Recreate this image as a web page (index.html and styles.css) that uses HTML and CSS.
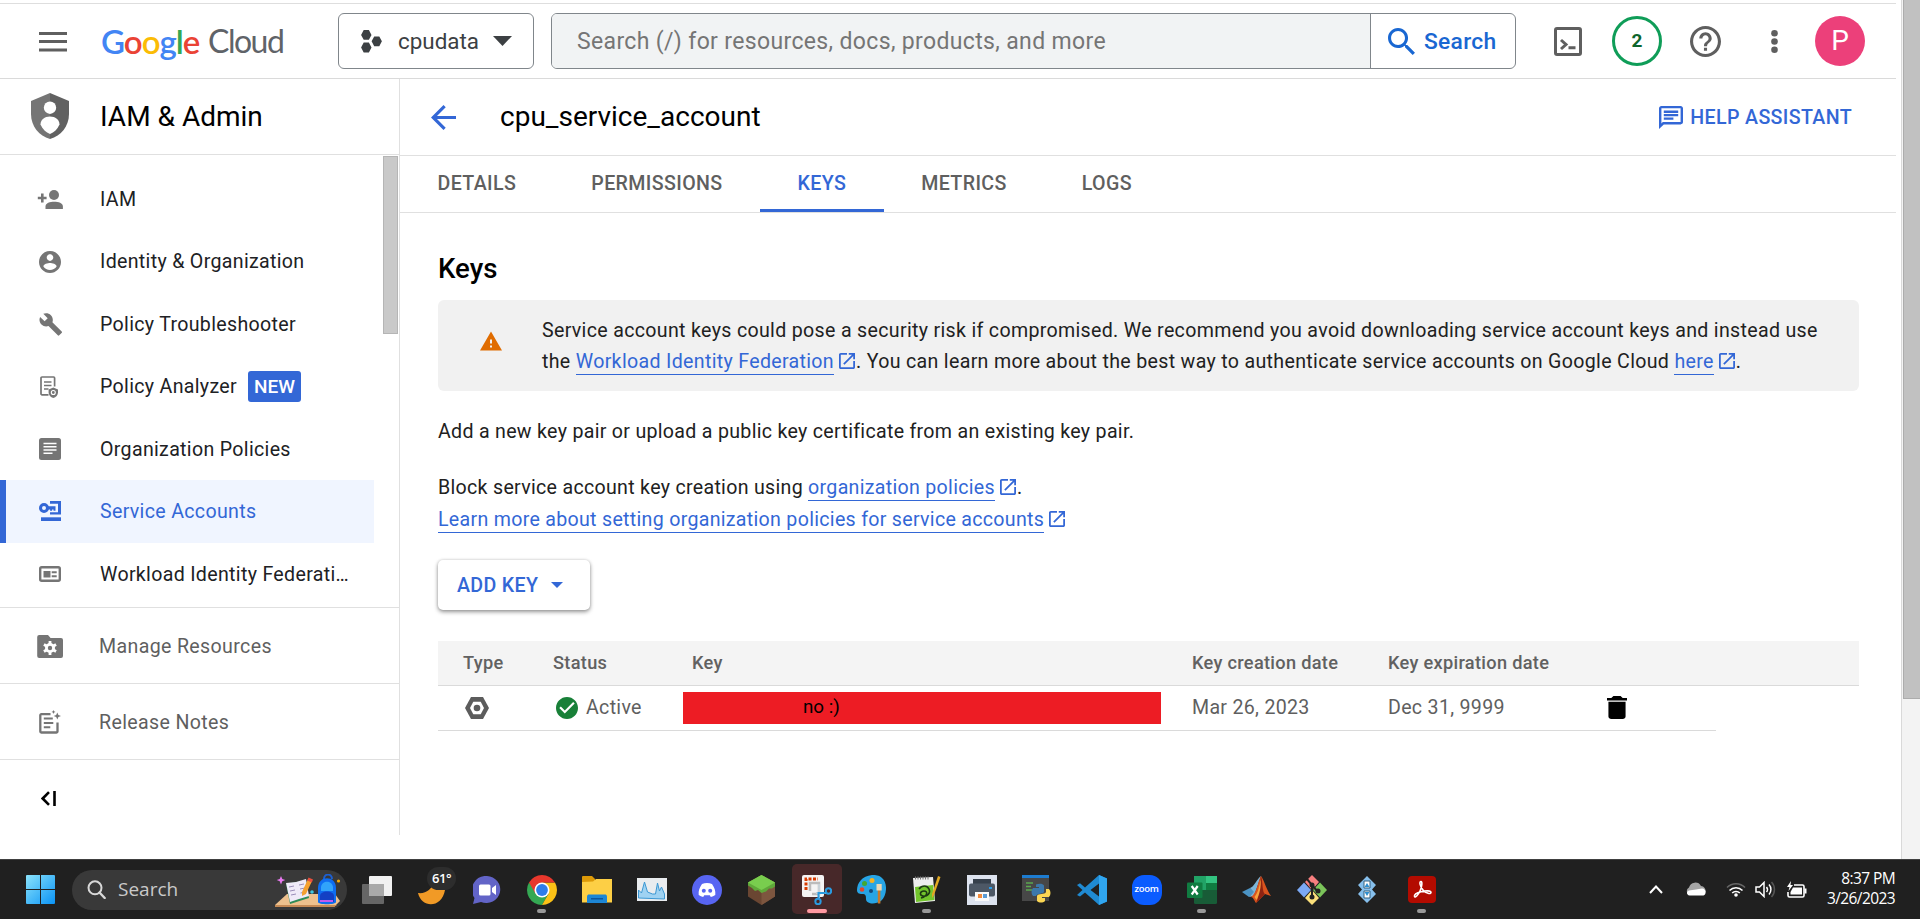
FILE: index.html
```html
<!DOCTYPE html>
<html lang="en">
<head>
<meta charset="utf-8">
<title>cpu_service_account – IAM &amp; Admin – cpudata – Google Cloud console</title>
<link rel="stylesheet" href="styles.css">
</head>
<body>
<svg class="defs" width="0" height="0" aria-hidden="true">
  <symbol id="ext" viewBox="3 3 18 18"><path d="M19 19H5V5h7V3H5c-1.11 0-2 .9-2 2v14c0 1.1.89 2 2 2h14c1.1 0 2-.9 2-2v-7h-2v7zM14 3v2h3.59l-9.83 9.83 1.41 1.41L19 6.41V10h2V3h-7z"/></symbol>
</svg>
<div class="screen">
 <div class="browser">
  <div class="page">
   <header class="topbar">
    <svg class="menu" width="28" height="20" viewBox="0 0 28 20"><path d="M0 0h28v3H0zM0 8h28v3H0zM0 16.5h28v3H0z" fill="#5f5f5f"/></svg>
    <div class="logo"><span class="google"><b class="b">G</b><b class="r">o</b><b class="y">o</b><b class="b">g</b><b class="g">l</b><b class="r">e</b></span><span class="cloud">Cloud</span></div>
    <div class="project">
     <svg width="21" height="23" viewBox="0 0 21 23" fill="#3c4043"><path d="M2.7 0h5.2l2.6 4.9-2.6 4.9H2.7L.1 4.9zM2.7 12.6h5.2l2.6 4.9-2.6 4.9H2.7L.1 17.5zM13.2 6.4h5.1l2.6 4.9-2.6 4.9h-5.1l-2.6-4.9z"/></svg>
     <span class="project-name">cpudata</span>
     <svg width="19" height="10" viewBox="0 0 19 10"><path d="M0 0h19l-9.500 10z" fill="#3c4043"/></svg>
    </div>
    <div class="search">
     <div class="search-field">Search (/) for resources, docs, products, and more</div>
     <div class="search-btn"><svg width="27" height="27" viewBox="3 3 17.500 17.500" fill="#1967d2"><path d="M15.500 14h-.79l-.28-.27C15.410 12.590 16 11.110 16 9.500 16 5.910 13.090 3 9.500 3S3 5.910 3 9.500 5.910 16 9.500 16c1.610 0 3.090-.59 4.230-1.570l.27.28v.79l5 4.990L20.490 19l-4.990-5zm-6 0C7.010 14 5 11.990 5 9.500S7.010 5 9.500 5 14 7.010 14 9.500 11.990 14 9.500 14z"/></svg><span>Search</span></div>
    </div>
    <svg class="shell" width="28" height="29" viewBox="0 0 28 29"><rect x="1.500" y="1.500" width="25" height="26" rx="1.500" fill="none" stroke="#5f5f5f" stroke-width="3"/><path d="M7 13l5 4.500L7 22M14.500 20.700h7" fill="none" stroke="#5f5f5f" stroke-width="3"/></svg>
    <div class="notif">2</div>
    <svg class="help" width="31" height="31" viewBox="2 2 20 20" fill="#5f5f5f"><path d="M11 18h2v-2h-2v2zm1-16C6.480 2 2 6.480 2 12s4.480 10 10 10 10-4.480 10-10S17.520 2 12 2zm0 18c-4.410 0-8-3.590-8-8s3.590-8 8-8 8 3.590 8 8-3.590 8-8 8zm0-14c-2.210 0-4 1.790-4 4h2c0-1.100.9-2 2-2s2 .9 2 2c0 2-3 1.750-3 5h2c0-2.250 3-2.500 3-5 0-2.210-1.790-4-4-4z"/></svg>
    <svg class="dots" width="7" height="23" viewBox="0 0 7 23" fill="#5f5f5f"><circle cx="3.500" cy="3.300" r="3.300"/><circle cx="3.500" cy="11.500" r="3.300"/><circle cx="3.500" cy="19.700" r="3.300"/></svg>
    <div class="avatar">P</div>
   </header>
   <div class="body">
    <nav class="side">
     <div class="product">
      <svg width="38" height="46" viewBox="0 0 38 46"><path d="M19 0L0 8v13c0 12 8 22 19 25z" fill="#757575"/><path d="M19 0l19 8v13c0 12-8 22-19 25z" fill="#616161"/><circle cx="19" cy="14.700" r="6.200" fill="#fff"/><path d="M9.500 31.500c0-5 4.200-8 9.500-8s9.500 3 9.500 8c-2 4.500-5.500 8-9.500 9.500-4-1.500-7.500-5-9.500-9.500z" fill="#fff"/></svg>
      <span class="product-name">IAM &amp; Admin</span>
     </div>
     <div class="nav-list">
      <div class="thumb"></div>
      <div class="item"><i><svg width="26" height="19" viewBox="0 0 26 19"><path d="M4 3.500h2.600v3.200h3V9.300h-3v3.200H4V9.300H.8V6.700H4z"/><circle cx="17" cy="5" r="5"/><path d="M8.500 19v-2.500c0-3.500 4.500-4.800 8.700-4.800s8.700 1.300 8.700 4.800V19z"/></svg></i><span>IAM</span></div>
      <div class="item"><i><svg width="22" height="22" viewBox="2 2 20 20"><path d="M12 2C6.480 2 2 6.480 2 12s4.480 10 10 10 10-4.480 10-10S17.520 2 12 2zm0 3c1.660 0 3 1.340 3 3s-1.340 3-3 3-3-1.340-3-3 1.340-3 3-3zm0 14.200c-2.500 0-4.710-1.280-6-3.220.03-1.990 4-3.080 6-3.080 1.990 0 5.970 1.090 6 3.080-1.290 1.940-3.500 3.220-6 3.220z"/></svg></i><span>Identity &amp; Organization</span></div>
      <div class="item"><i><svg width="23" height="23" viewBox="0.500 1 22.500 22.200"><path d="M22.700 19l-9.100-9.100c.9-2.300.4-5-1.500-6.900-2-2-5-2.400-7.400-1.300L9 6 6 9 1.600 4.700C.4 7.100.9 10.100 2.900 12.100c1.900 1.900 4.600 2.400 6.900 1.500l9.100 9.100c.4.4 1 .4 1.400 0l2.300-2.300c.5-.4.5-1.100.1-1.400z"/></svg></i><span>Policy Troubleshooter</span></div>
      <div class="item"><i class="l"><svg width="18" height="22" viewBox="0 0 18 22"><path d="M8.500 18.800H2A1 1 0 0 1 1 17.800V2A1 1 0 0 1 2 1H13.600A1 1 0 0 1 14.600 2V10.500M4 6h7.500M4 9.500h7.500M4 13h4.500" fill="none" stroke="#757575" stroke-width="1.700"/><path d="M13.300 11.500l4.700 2v3c0 2.600-2 4.900-4.700 5.500-2.700-.6-4.700-2.900-4.700-5.500v-3z"/><circle cx="13.300" cy="16.500" r="2" fill="none" stroke="#fff" stroke-width="1.100"/></svg></i><span class="up">Policy Analyzer</span><em>NEW</em></div>
      <div class="item"><i><svg width="22" height="22" viewBox="0 0 22 22"><rect width="22" height="22" rx="2.500"/><path d="M4.500 5.500h13M4.500 8.800h13M4.500 12h13M4.500 15.300h9" stroke="#fff" stroke-width="1.500"/></svg></i><span>Organization Policies</span></div>
      <div class="item active"><i><svg width="22" height="20" viewBox="0 0 22 20"><path d="M2 16.300h20V20H2z"/><circle cx="5" cy="7" r="3.500" fill="none" stroke="#3367d6" stroke-width="3"/><path d="M8 5.300h8.500v4.500h-2V8.500h-1.400v1.300h-2V8.500H8zM11 0h11v13.500H11v-2.200h8V2.700h-8z"/></svg></i><span>Service Accounts</span></div>
      <div class="item"><i><svg width="22" height="16" viewBox="0 0 22 16"><rect x="1.200" y="1.200" width="19.600" height="13.600" rx="1.500" fill="none" stroke="#757575" stroke-width="2.400"/><path d="M4.500 5h7v6.500h-7z"/><path d="M12.700 6.200h5M12.700 10.200h5" stroke="#757575" stroke-width="2"/></svg></i><span>Workload Identity Federati…</span></div>
     </div>
     <div class="foot-item"><i><svg width="26" height="23" viewBox="0 0 26 23"><path d="M2.200 0H11l2.600 3H24a2 2 0 0 1 2 2v16a2 2 0 0 1-2 2H2.200A2 2 0 0 1 .2 21V2A2 2 0 0 1 2.200 0z"/><g fill="#fff"><circle cx="13" cy="13" r="5"/><path d="M11.600 6h2.800v14h-2.800z"/><path d="M11.600 6h2.800v14h-2.800z" transform="rotate(60 13 13)"/><path d="M11.600 6h2.800v14h-2.800z" transform="rotate(120 13 13)"/></g><circle cx="13" cy="13" r="2.200"/></svg></i><span>Manage Resources</span></div>
     <div class="foot-item"><i><svg width="22" height="24" viewBox="0 0 22 24"><path d="M11.500 4.200H2.300a1 1 0 0 0-1 1V21.500a1 1 0 0 0 1 1H17.500a1 1 0 0 0 1-1V12.500" fill="none" stroke="#757575" stroke-width="2.300"/><path d="M4.800 8.500h9M4.800 13h9.500M4.800 17.300h6.500" fill="none" stroke="#757575" stroke-width="2"/><path d="M18.300 2.500l1.100 2.400 2.600 1-2.600 1-1.100 2.600-1.100-2.600-2.500-1 2.500-1zM14.500 0l.6 1.300 1.400.6-1.400.6-.6 1.400-.6-1.400-1.400-.6 1.400-.6z"/></svg></i><span>Release Notes</span></div>
     <div class="foot-item"><i><svg class="collapse" width="15" height="15" viewBox="0 0 15 15"><path d="M8 1.200L1.700 7.500 8 13.800M13.500 0V15" fill="none" stroke="#000" stroke-width="2.600"/></svg></i></div>
    </nav>
    <main class="main">
     <div class="titlebar">
      <svg width="25" height="25" viewBox="4 4 16 16" fill="#3367d6"><path d="M20 11H7.830l5.590-5.590L12 4l-8 8 8 8 1.410-1.410L7.830 13H20v-2z"/></svg>
      <h1>cpu_service_account</h1>
      <div class="assist"><svg width="24" height="23" viewBox="2 2 20 20" preserveAspectRatio="none" fill="#3367d6"><path d="M4 4h16v12H5.170L4 17.170V4m0-2c-1.100 0-1.990.9-1.990 2L2 22l4-4h14c1.100 0 2-.9 2-2V4c0-1.100-.9-2-2-2H4zm2 10h8v2H6v-2zm0-3h12v2H6V9zm0-3h12v2H6V6z"/></svg><span>HELP ASSISTANT</span></div>
     </div>
     <div class="tabs"><span>DETAILS</span><span>PERMISSIONS</span><span class="on">KEYS</span><span>METRICS</span><span>LOGS</span></div>
     <div class="content">
      <h2>Keys</h2>
      <div class="alert">
       <svg width="22" height="20" viewBox="1 2 22 19"><path fill="#e06c00" d="M1 21h22L12 2 1 21zm12-3h-2v-2h2v2zm0-4h-2v-4h2v4z"/></svg>
       <p>Service account keys could pose a security risk if compromised. We recommend you avoid downloading service account keys and instead use<br>the <a>Workload Identity Federation</a><svg class="ext"><use href="#ext"/></svg>. You can learn more about the best way to authenticate service accounts on Google Cloud <a>here</a><svg class="ext"><use href="#ext"/></svg>.</p>
      </div>
      <p class="para">Add a new key pair or upload a public key certificate from an existing key pair.</p>
      <p class="para links">Block service account key creation using <a>organization policies</a><svg class="ext"><use href="#ext"/></svg>.<br><a>Learn more about setting organization policies for service accounts</a><svg class="ext"><use href="#ext"/></svg></p>
      <div class="addkey"><span>ADD KEY</span><svg width="12" height="6" viewBox="0 0 12 6"><path d="M0 0h12L6 6z" fill="#3367d6"/></svg></div>
      <div class="thead row"><span>Type</span><span>Status</span><span>Key</span><span>Key creation date</span><span>Key expiration date</span></div>
      <div class="tbody row">
       <span><svg class="hex" width="24" height="22" viewBox="0 0 24 22"><path d="M6 0h12l6 11-6 11H6L0 11z" fill="#5c5c5c"/><path d="M8.300 4.800h7.400L19 11l-3.300 6.200H8.300L5 11z" fill="#fff"/><circle cx="12" cy="11" r="3.300" fill="#5c5c5c"/></svg></span>
       <span class="status"><svg width="22" height="22" viewBox="2 2 20 20"><path fill="#188038" d="M12 2C6.480 2 2 6.480 2 12s4.480 10 10 10 10-4.480 10-10S17.520 2 12 2zm-2 15l-5-5 1.410-1.410L10 14.170l7.590-7.590L19 8l-9 9z"/></svg>Active</span>
       <span class="redact">no :)</span>
       <span>Mar 26, 2023</span>
       <span>Dec 31, 9999</span>
       <span><svg class="trash" width="20" height="23" viewBox="5 3 14 18" preserveAspectRatio="none"><path d="M6 19c0 1.100.9 2 2 2h8c1.100 0 2-.9 2-2V7.500H6v11.500zM19 4.500h-3l-1.500-1.500h-5L8 4.500H5v2h14v-2z"/></svg></span>
      </div>
     </div>
    </main>
   </div>
  </div>
  <div class="vscroll"><div class="vthumb"></div></div>
 </div>
 <footer class="taskbar">
  <svg class="win" width="29" height="29" viewBox="0 0 29 29"><defs><linearGradient id="w" x1="0" y1="0" x2="1" y2="1"><stop offset="0" stop-color="#8be3fb"/><stop offset="1" stop-color="#0a93f5"/></linearGradient></defs><path fill="url(#w)" d="M1 0h13v14H0V1a1 1 0 0 1 1-1zM15 0h13a1 1 0 0 1 1 1v13H15zM0 15h14v14H1a1 1 0 0 1-1-1zM15 15h14v13a1 1 0 0 1-1 1H15z"/></svg>
  <div class="tsearch">
   <svg width="19" height="19" viewBox="0 0 19 19"><circle cx="8" cy="7.800" r="6.500" fill="none" stroke="#d8d8d8" stroke-width="2"/><path d="M12.500 12.500l5.200 5.500" stroke="#d8d8d8" stroke-width="2.400" stroke-linecap="round"/></svg>
   <span>Search</span>
   <svg class="art" width="68" height="34" viewBox="0 0 68 34"><path d="M12 20h48l5 7-6 6H0v-2z" fill="#eec18e"/><path d="M0 31h62l-3 2H0z" fill="#c58a55"/><path d="M6 2l1.300 3 3 1-3 1.300L6 10.500 4.700 7.300l-3-1.300 3-1z" fill="#e879f0"/><path d="M11 10l10-2 10-1 3 17-19 6z" fill="#2f8b57"/><path d="M11 9l10-1 3 17-9 3zM21 8l10-3 3 17-10 3z" fill="#efeaf8"/><path d="M14 13l5-1M15 17l5-1M16 21l5-1M24 11l5-1M25 15l5-1M25.500 19l5-1" stroke="#9a8db8" stroke-width="1"/><path d="M33 5l4 2-6 13-4 2 0-4z" fill="#f5a030"/><path d="M33.500 3.500l4.500 2-1.200 3-4.400-2z" fill="#ea4f3c"/><path d="M49 5c0-6 8-6 8 0" fill="none" stroke="#1d5fd0" stroke-width="2"/><path d="M43 14c0-13 18-13 18 0v14c0 3-18 3-18 0z" fill="#0f6df0"/><path d="M46 13c1-7 11-7 12 0v4H46z" fill="#31a4fa"/><path d="M45 22c0-6 14-6 14 0v6H45z" fill="#1340c4"/><path d="M45 26h13v2H45z" fill="#c05bf0"/><circle cx="37" cy="18" r="1.800" fill="#3ec7e0"/><circle cx="63.500" cy="7" r="1.600" fill="#f9ab00"/></svg>
  </div>
  <div class="apps">
   <div><svg width="30" height="28" viewBox="0 0 30 28"><rect x="7" width="23" height="20" rx="1" fill="#f1f1f1"/><rect y="8" width="22" height="20" rx="1" fill="#666"/><path d="M7 8h15v12H7z" fill="#a9a9a9"/></svg></div>
   <div class="weather"><svg width="28" height="28" viewBox="0 0 28 28"><path d="M0 16c8 1 14-4 16-11 9-2 12 2 11 8C24 31 4 32 0 16z" fill="#f19a26"/></svg><b>61°</b></div>
   <div><svg width="28" height="28" viewBox="0 0 28 28"><path d="M14 0a14 13.500 0 1 1-6 26L0 28l1.500-6A14 14 0 0 1 14 0z" fill="#6264c7"/><rect x="6" y="8.500" width="11.500" height="11" rx="1.500" fill="#fff"/><path d="M19 12l4-3v10l-4-3z" fill="#fff"/></svg></div>
   <div><svg width="30" height="30" viewBox="0 0 30 30"><path d="M15 15L2.010 7.500A15 15 0 0 0 15 30l6.500-11.250z" fill="#34a853"/><path d="M15 15l6.500 3.750L15 30A15 15 0 0 0 27.990 7.500H15z" fill="#fbc116"/><path d="M2.010 7.500A15 15 0 0 1 27.990 7.500H15L8.500 18.750z" fill="#e8372c"/><circle cx="15" cy="15" r="7.500" fill="#fff"/><circle cx="15" cy="15" r="5.900" fill="#2f7de9"/></svg><u></u></div>
   <div><svg width="30" height="27" viewBox="0 0 30 27"><path d="M0 1a1 1 0 0 1 1-1h9l3 3v4H0z" fill="#dd9a08"/><path d="M0 6l11-.5L14 3h16v23.500H0z" fill="#fdcf45"/><path d="M5 27v-6c0-2 1-2.500 2-2.500h16c1 0 2 .5 2 2.500v6z" fill="#1d86d5"/><path d="M9 22h12v1.500H9z" fill="#0d559d"/></svg></div>
   <div><svg width="30" height="23" viewBox="0 0 30 23"><path d="M0 0h30v23H0z" fill="#e9ecef"/><path d="M1.500 20V12l3 3 3-11 3 10 5 2 3 0 2-11 2 8 2-4 3 7v5z" fill="#9fd2f2" stroke="#3b97d3"/></svg></div>
   <div><svg width="30" height="30" viewBox="0 0 30 30"><circle cx="15" cy="15" r="15" fill="#5865f2"/><path d="M10 9c3-1.200 7-1.200 10 0 2.500 3.500 3.700 7 3.300 11-1.500 1-3 1.700-4.500 2l-1-1.700h-5.600L11.200 22c-1.500-.3-3-1-4.500-2C6.300 16 7.500 12.500 10 9z" fill="#fff"/><circle cx="11.800" cy="15.700" r="2" fill="#5865f2"/><circle cx="18.200" cy="15.700" r="2" fill="#5865f2"/></svg></div>
   <div><svg width="27" height="30" viewBox="0 0 27 30"><path d="M13.500 0L27 7.500v14L13.500 30 0 21.500v-14z" fill="#6a4632"/><path d="M13.500 15L27 7.500v14L13.500 30z" fill="#7d563f"/><path d="M13.500 0L27 7.500v4l-3 2-3 0-3 3-4.500 1.500-3.500-3-3 1-3-3L0 10.500v-3z" fill="#5fa83a"/><path d="M13.500 0L27 7.500 13.500 15 0 7.500z" fill="#79cd4e"/></svg></div>
   <div class="sel"><svg width="30" height="30" viewBox="0 0 30 30"><rect width="22" height="22" rx="2" fill="#f4f4f4"/><path d="M4 15V4h12" fill="none" stroke="#d83b01" stroke-width="3" stroke-dasharray="3 1.500"/><path d="M8 16V8h9v11h-7" fill="none" stroke="#bcbcbc" stroke-width="2.500"/><path d="M17 9v14M14 18h11" stroke="#c9d2d8" stroke-width="2"/><circle cx="16" cy="26.500" r="2.700" fill="none" stroke="#2a9be0" stroke-width="2"/><circle cx="26.500" cy="16" r="2.700" fill="none" stroke="#2a9be0" stroke-width="2"/><path d="M16.500 24v-6h7" fill="none" stroke="#2a9be0" stroke-width="2"/></svg><u></u></div>
   <div><svg width="29" height="29" viewBox="0 0 29 29"><path d="M15 0C5 1 0 8 0 15c0 3 2 4 5 4 4 0 4 2 4 5 0 5 9 6 15 2 6-5 7-18 1-23-3-3-6-3-10-3z" fill="#27a5e5"/><circle cx="5" cy="14.500" r="2.300" fill="#e2452f"/><circle cx="7.500" cy="8.500" r="2.500" fill="#43a832"/><circle cx="15" cy="5.500" r="2.500" fill="#f4b223"/><circle cx="14" cy="16" r="2" fill="#134a7c"/><path d="M20.800 15h2.600v13.500h-2.600z" fill="#c87a2b"/><path d="M19.500 9h5.200v6.500h-5.200z" fill="#ead7b5"/></svg></div>
   <div><svg width="28" height="29" viewBox="0 0 28 29"><path d="M0 3l20-1 2 24-20 2z" fill="#eee"/><path d="M2 12l18-2 1.500 15L3 27z" fill="#72c52c"/><path d="M6 14c3-4 8-4 10 0s-2 8-6 7-3-5 1-5 4 5-3 7" fill="none" stroke="#1d3a12" stroke-width="1.600"/><path d="M25 1l2.500 1L21 20l-2 3 0-4z" fill="#e2a922"/><path d="M2 3h14" stroke="#777" stroke-width="3" stroke-dasharray="1 1.500"/></svg><u></u></div>
   <div><svg width="30" height="30" viewBox="0 0 30 30"><path d="M0 0h30v30H0z" fill="#dde3ef"/><path d="M6 4h18v6H6z" fill="#36404c"/><rect x="2" y="8.500" width="26" height="13" rx="2" fill="#4d5866"/><path d="M8 17h14v9H8z" fill="#fafafa"/><path d="M11 19h4v4h-4z" fill="#f28b3c"/><path d="M16 19h4v4h-4z" fill="#5b9bd5"/><path d="M22 12h3v2h-3z" fill="#2c9ce8"/></svg></div>
   <div><svg width="29" height="29" viewBox="0 0 29 29"><path d="M0 2h27v24H0z" fill="#474747"/><path d="M0 0h27v3H0z" fill="#1d7cd0"/><path d="M4 8h7M4 11.500h5M4 15h6" stroke="#5ba84f" stroke-width="1.500"/><path d="M14 9.500c3-1 7-1 8 1V17c0 2-7 1-8 4h-3c-2-2-2-6 0-8h6v-1h-3z" fill="#3c78ab"/><path d="M24 14h3c2 2 2 6 0 8h-7v1h3v3c-2 2-6 2-8 0v-5c1-3 8-1 9-4z" fill="#fbd653"/></svg></div>
   <div><svg width="30" height="30" viewBox="0 0 30 30"><path d="M22 0l8 3.500v23L22 30 8 17.500l-5 4L0 20l5.500-5L0 10l3-1.700 5 4.200zM22 8.500L13.500 15l8.500 6.500z" fill="#1f8ad2" fill-rule="evenodd"/><path d="M22 0l8 3.500v23L22 30z" fill="#30a6f0"/></svg></div>
   <div><div class="zoom">zoom</div></div>
   <div><svg width="30" height="28" viewBox="0 0 30 28"><rect x="7" width="23" height="28" rx="1.500" fill="#185c37"/><path d="M7 0h12v14H7z" fill="#21a366"/><path d="M19 0h11v7H19z" fill="#33c481"/><path d="M19 7h11v7H19z" fill="#107c41"/><rect y="6.500" width="15.500" height="15.500" rx="1" fill="#107c41"/><path d="M4.700 10l6 8.500M10.700 10l-6 8.500" stroke="#fff" stroke-width="2.200"/></svg><u></u></div>
   <div><svg width="29" height="27" viewBox="0 0 29 27"><path d="M0 16l8-4 5 4-6 5z" fill="#4b93c4"/><path d="M8 12c4-1 7-9 11-12l-7 20-5 1 5-5z" fill="#7cb5d8"/><path d="M19 0c3 4 6 15 10 20l-6-2-9 9c-2-3-3-6-5-6 6-4 7-16 10-21z" fill="#d9541e"/><path d="M19 0c2 6 1 16 4 18l-9 9c4-8 3-19 5-27z" fill="#8e2312"/><path d="M18.500 3c1 7-1 16-4 21l-2-3c4-5 5-12 6-18z" fill="#f6a23c"/></svg></div>
   <div><svg width="30" height="30" viewBox="0 0 30 30"><path d="M15 0l7 7-7 8-7-8z" fill="#f77f7f"/><path d="M23 7.500l7 7.500-7 7.500-7-7.500z" fill="#7bc45a"/><path d="M7 7.500l7 7.500-7 7.500L0 15z" fill="#7ba9f5"/><path d="M15 15l7 8-7 7-7-7z" fill="#fbe07a"/><path d="M10 4l5 6v13M15 10l6 7" fill="none" stroke="#222" stroke-width="2"/><circle cx="15" cy="10" r="2.500" fill="#222"/><circle cx="15" cy="22" r="2.500" fill="#222"/><circle cx="21" cy="16" r="2.500" fill="#222"/></svg></div>
   <div><svg width="18" height="27" viewBox="0 0 18 27"><path d="M9 0l9 9-4 4.500 4 4.500-9 9-9-9 4-4.500L0 9z" fill="#86bfec"/><path d="M6 5h6v7H6zM6 15h6v7H6z" fill="#fff" stroke="#35607f"/><path d="M9 7l2.500 4h-5zM9 20l-2.500-4h5z" fill="#2e8fd0"/></svg></div>
   <div class="acro"><svg width="28" height="27" viewBox="0 0 28 27"><rect width="28" height="27" rx="4" fill="#b30b00"/><path d="M13 5.500c-2 0-1 5 2 8.500s8 4.500 8 2.500-5-2-10-.8S6 19 6.500 20.500s3.500-1 5.500-5.500 2.500-9.500 1-9.500z" fill="none" stroke="#fff" stroke-width="1.600"/></svg><u></u></div>
  </div>
  <div class="tray">
   <svg width="14" height="9" viewBox="0 0 14 9"><path d="M1 8l6-6.500L13 8" fill="none" stroke="#fff" stroke-width="2"/></svg>
   <svg class="cl" width="20" height="14" viewBox="0 0 20 14"><path d="M4 13a4 4 0 0 1-1-7.500A6.500 6.500 0 0 1 15 4a5 5 0 0 1 4.500 6z" fill="#a5a5a5"/><path d="M3.500 13.500C.5 13 0 9.500 3 8.500l7-1 6-1c4 0 5 5.500 1.500 7z" fill="#fff"/></svg>
   <svg class="wf" width="20" height="15" viewBox="0 0 20 15" fill="none"><path d="M1 5.500a12.500 12.500 0 0 1 18 0" stroke="#666" stroke-width="1.500"/><path d="M3.500 8.500a9 9 0 0 1 13 0M6.200 11a5.400 5.400 0 0 1 7.600 0" stroke="#fff" stroke-width="1.600"/><circle cx="10" cy="13" r="1.800" fill="#fff"/></svg>
   <svg class="vo" width="21" height="17" viewBox="0 0 21 17" fill="none" stroke="#fff" stroke-width="1.500"><path d="M1 6h3.500L9 1.500v14L4.500 11H1z"/><path d="M11.500 6a4 4 0 0 1 0 5M14 3.500a7.500 7.500 0 0 1 0 10"/><path d="M16.500 1a11 11 0 0 1 0 15" stroke="#555"/></svg>
   <svg class="ba" width="21" height="17" viewBox="0 0 21 17"><path d="M8 4h8.500A1.500 1.500 0 0 1 18 5.500v9A1.500 1.500 0 0 1 16.500 16h-13A1.500 1.500 0 0 1 2 14.500V11" fill="none" stroke="#fff" stroke-width="1.600"/><path d="M7 6.500h9v7H4.500V11zM18.500 7.500h2v5h-2zM5 0L1 6h2.500L2.500 10 7 4H4.500z" fill="#fff"/></svg>
   <div class="clock">8:37 PM<br>3/26/2023</div>
  </div>
 </footer>
</div>
</body>
</html>
```
FILE: styles.css
```css
*{box-sizing:border-box}
body,h1,h2,p{margin:0}
body{font-family:Roboto,"Liberation Sans",sans-serif;background:#fff;overflow:hidden;color:#000}
svg{display:block;flex:none}
.defs{position:absolute}
.screen{width:1920px;height:919px;display:flex;flex-direction:column}
.browser{flex:none;height:859px;display:flex}
.page{width:1896px;padding-top:3px}
.vscroll{margin-left:5px;width:19px;background:#f3f3f3;border-left:1px solid #d9d9d9;padding-left:1px}
.vthumb{height:699px;background:#c1c1c1;border:1px solid #acacac;border-right:0;border-top:0}

/* Console header */
.topbar{height:76px;border-top:1px solid #dedede;border-bottom:1px solid #dadada;display:flex;align-items:center;padding-left:39px}
.menu{margin-top:1px}
.logo{margin-left:34px;width:237px;display:flex;font-family:Lato,Roboto,sans-serif;font-size:33px;line-height:40px;padding-bottom:1px}
.logo b{font-weight:600}
.google{letter-spacing:-1px;width:107px}
.cloud{color:#5f6368;font-size:32px;letter-spacing:-1.500px}
.b{color:#4285f4}.r{color:#ea4335}.y{color:#fbbc05}.g{color:#34a853}
.project{width:196px;height:56px;border:1px solid #80868b;border-radius:6px;display:flex;align-items:center;padding-left:22px;color:#3c4043}
.project-name{font-size:22.400px;margin-left:16px;width:95px}
.search{margin-left:17px;width:965px;height:56px;border:1px solid #80868b;border-radius:6px;display:flex;overflow:hidden}
.search-field{width:819px;background:#f1f3f4;border-right:1px solid #80868b;padding-left:25px;font-size:23px;letter-spacing:.35px;line-height:55px;color:#757575;white-space:nowrap}
.search-btn{display:flex;align-items:center;padding-left:17px;gap:9px;color:#1967d2;font-weight:500;font-size:22.800px;letter-spacing:.3px}
.shell{margin-left:38px}
.notif{margin-left:30px;width:50px;height:50px;border:3px solid #0f9d58;border-radius:50%;font-weight:700;font-size:19px;line-height:44px;text-align:center;color:#0d652d}
.help{margin-left:28px}
.dots{margin-left:50px}
.avatar{margin-left:37px;width:50px;height:50px;border-radius:50%;background:#ec407a;color:#fff;font-size:28px;line-height:50px;text-align:center}

/* Product navigation */
.body{display:flex}
.side{width:400px;height:756px;border-right:1px solid #e0e0e0}
.product{height:76px;border-bottom:1px solid #e0e0e0;display:flex;align-items:center;padding-left:31px;padding-bottom:1px}
.product-name{margin-left:31px;font-size:28px}
.nav-list{height:453px;padding-top:13px;border-bottom:1px solid #e0e0e0;position:relative}
.thumb{position:absolute;right:1px;top:1px;width:15px;height:178px;background:#c9c9c9;border:1px solid #b5b5b5}
.item{height:62.500px;width:374px;display:flex;align-items:center;font-size:19.600px;letter-spacing:.32px;color:#202124;white-space:nowrap}
.item i,.foot-item i{width:100px;flex:none;display:flex;justify-content:center}
.item svg,.foot-item svg{fill:#757575}
.item i.l{padding-right:3px}
.item .up{padding-bottom:1px}
.item em{font-style:normal;font-weight:500;font-size:19px;letter-spacing:0;color:#fff;background:#3367d6;border-radius:3px;width:53px;text-align:center;height:31px;line-height:31px;margin-left:11px}
.item.active{background:#f0f5ff;color:#3367d6;border-left:6px solid #3367d6;margin-top:-.5px;margin-bottom:.5px}
.item.active i{width:94px;padding-right:6px}
.item.active svg{fill:#3367d6}
.foot-item{height:76px;border-bottom:1px solid #e0e0e0;display:flex;align-items:center;padding-top:1px;font-size:19.600px;letter-spacing:.35px;color:#5f5f5f}
.foot-item span{margin-left:-1px}
.foot-item:last-child{border:0;padding:0}
.collapse{margin-right:3px}

/* Service account detail */
.main{width:1496px}
.titlebar{height:77px;border-bottom:1px solid #e0e0e0;display:flex;align-items:center;padding-left:31px}
h1{font-size:28px;font-weight:400;margin-left:44px;flex:1;padding-bottom:1px}
.assist{display:flex;gap:7px;align-items:center;margin-right:44px;color:#3367d6;font-size:19.600px;letter-spacing:.36px;font-weight:500}
.tabs{height:57px;border-bottom:1px solid #e0e0e0;display:flex;font-size:19.600px;letter-spacing:.38px;font-weight:500;color:#5f5f5f;line-height:55px}
.tabs span{padding:0 37.500px;height:56px}
.tabs .on{color:#3367d6;border-bottom:3px solid #3367d6}
.content{padding:41px 37px 0 38px}
h2{font-size:27.600px;font-weight:500;line-height:30px;margin-bottom:16px}
.alert{height:91px;background:#f1f1f1;border-radius:6px;display:flex;padding:15px 0 0 42px}
.alert>svg{margin-top:16px}
.alert p{margin-left:40px;font-size:19.600px;letter-spacing:.324px;line-height:31px;white-space:nowrap;color:#212121}
a{color:#3367d6;border-bottom:1px solid #3367d6;padding-bottom:1px}
.ext{display:inline-block;width:16px;height:16px;fill:#3367d6;margin:0 1px 0 5px;vertical-align:-1px}
.para{font-size:19.600px;letter-spacing:.3px;line-height:32px;color:#212121;margin-top:25px}
.links{margin-top:24px}
.addkey{width:152px;height:50px;margin-top:24px;border-radius:5px;box-shadow:0 2px 4px rgba(0,0,0,.4),0 0 3px rgba(0,0,0,.15);display:flex;align-items:center;padding-left:19px;gap:13px;color:#3367d6;font-weight:500;font-size:19.600px;letter-spacing:.35px}
.row{display:grid;grid-template-columns:90px 139px 500px 196px 216px auto;padding-left:25px;align-items:center;font-size:19.600px;letter-spacing:.3px;color:#5f5f5f}
.thead{margin-top:31px;height:45px;padding-bottom:2px;background:#f4f4f4;border-bottom:1px solid #dadada;font-weight:500;font-size:18.200px;color:#616161}
.tbody{height:45px;padding-bottom:1px;width:1278px;border-bottom:1px solid #dadada}
.hex{margin-left:2px}
.status{display:flex;align-items:center;gap:8px;padding-left:3px}
.redact{background:#ed1c24;width:478px;height:32px;margin:0 0 0 -9px;padding-left:120px;line-height:30px;font-size:18.800px;letter-spacing:0;color:#000}
.trash{margin-left:3px}

/* Desktop taskbar */
.taskbar{height:60px;background:#202020;border-top:1px solid #404040;display:flex;align-items:center;padding-left:26px;color:#fff;font-family:"Open Sans","Noto Sans",sans-serif}
.tsearch{margin-left:17px;width:275px;height:40px;border-radius:20px;background:#393939;display:flex;align-items:center;padding-left:15px;font-size:19px;color:#c9c9c9}
.tsearch span{margin-left:12px;width:157px;padding-bottom:2px}
.art{margin-top:2px}
.apps{margin-left:2px;display:flex}
.apps>div{width:55px;height:59px;display:flex;align-items:center;justify-content:center;position:relative}
.apps u{position:absolute;bottom:6px;left:23px;width:9px;height:4px;border-radius:2px;background:#999}
.apps .sel::before{content:"";position:absolute;left:2.500px;top:4px;width:50px;height:50px;border-radius:5px;background:#472829}
.apps .sel svg{position:relative}
.apps .sel u{left:18px;width:20px;background:#ff9aa2}
.weather svg{margin-top:3px}
.weather b{position:absolute;left:23px;top:7px;width:29px;height:23px;border-radius:12px;background:#2d2d2d;font:600 13px/22px "Open Sans",sans-serif;letter-spacing:-.5px;text-align:center}
.zoom{width:30px;height:30px;border-radius:12px;background:#0b5cff;font:600 9.500px/28px "Open Sans",sans-serif;text-align:center;letter-spacing:-.3px}
.tray{margin-left:200px;display:flex;align-items:center;flex:1}
.tray>svg{margin-bottom:1px}
.cl{margin-left:23px}.wf{margin-left:20px}.vo{margin-left:9px}.ba{margin-left:10px}
.clock{margin-left:auto;margin-right:25px;padding-bottom:3px;text-align:right;font-size:15.500px;letter-spacing:-.6px;line-height:20px}
```
